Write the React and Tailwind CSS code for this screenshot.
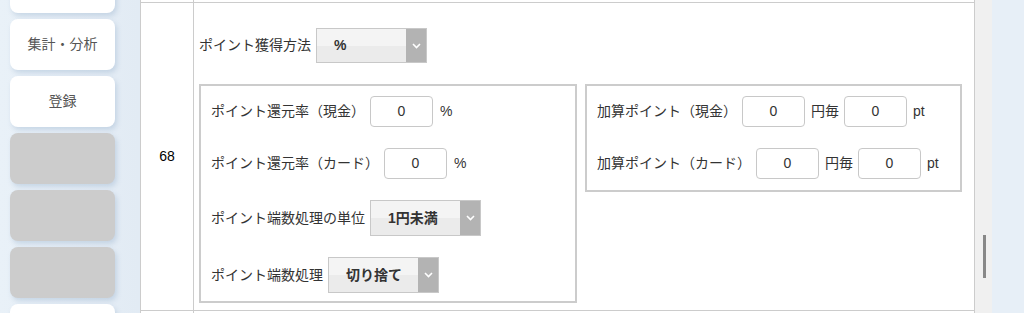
import React from "react";

const FONT = { fontFamily: '"Liberation Sans", "Noto Sans CJK JP", sans-serif' };

// sidebar cards, first one is cut off at the top
const MENU = [
  { label: "", grey: false },
  { label: "集計・分析", grey: false },
  { label: "登録", grey: false },
  { label: "", grey: true },
  { label: "", grey: true },
  { label: "", grey: true },
  { label: "", grey: false },
];

function Chevron() {
  return (
    <svg width="9" height="6" viewBox="0 0 9 6" fill="none">
      <path d="M1 1l3.5 3.5L8 1" stroke="#fff" strokeWidth="1.6" />
    </svg>
  );
}

function Select({ value, h = "h-[36px]" }) {
  return (
    <div className={`w-[111px] ${h} border border-[#c8c8c8] flex shrink-0`}>
      <div className="flex-1 flex flex-col relative">
        <div className="flex-1 bg-[#f4f4f4]" />
        <div className="flex-1 bg-[#ebebeb]" />
        <span className="absolute inset-0 flex items-center pl-[17px] text-[14px] font-semibold text-[#333]">
          {value}
        </span>
      </div>
      <div className="w-[20px] bg-[#b3b3b3] flex items-center justify-center">
        <Chevron />
      </div>
    </div>
  );
}

function Input({ value = "0" }) {
  return (
    <div className="w-[63px] h-[31px] border border-[#c8c8c8] rounded-[4px] bg-white flex items-center justify-center text-[14px] text-[#333] shrink-0">
      {value}
    </div>
  );
}

function Row({ children, h = "h-[31px]" }) {
  return <div className={`flex items-center gap-[5px] ${h} text-[14px] text-[#333] whitespace-nowrap`}>{children}</div>;
}

export default function App() {
  return (
    <div className="w-[1024px] h-[313px] overflow-hidden flex bg-[#e7eff7]" style={FONT}>
      <aside className="w-[140px] shrink-0 pl-[10px] flex flex-col gap-[6px] mt-[-38px] bg-gradient-to-r from-[#e9f1f8] to-[#e2ebf4]">
        {MENU.map((m, i) => (
          <div
            key={i}
            className={`w-[105px] h-[51px] shrink-0 rounded-[8px] flex items-center justify-center text-[14px] text-[#555] shadow-[2px_3px_5px_rgba(120,150,185,0.28)] ${
              m.grey ? "bg-[#cccccc]" : "bg-white"
            }`}
          >
            {m.label}
          </div>
        ))}
      </aside>

      <main className="w-[835px] shrink-0 border-x border-[#cccccc] bg-white flex flex-col">
        <div className="h-[2px] flex shrink-0">
          <div className="w-[53px] border-r border-[#cccccc]" />
        </div>
        <div className="h-[309px] shrink-0 flex border-y border-[#cccccc]">
          <div className="w-[53px] border-r border-[#cccccc] flex items-center justify-center text-[14px] text-black">
            68
          </div>
          <div className="flex-1 pl-[5px] pt-[25px]">
            <Row h="h-[35px]">
              <span>ポイント獲得方法</span>
              <Select value="%" h="h-[35px]" />
            </Row>
            <div className="flex items-start gap-[8px] mt-[21px]">
              <div className="w-[378px] border-2 border-[#cccccc] pt-[10px] pb-[8px] px-[10px] flex flex-col gap-[21px]">
                <Row>
                  <span>ポイント還元率（現金）</span>
                  <Input />
                  <span className="ml-[2px]">%</span>
                </Row>
                <Row>
                  <span>ポイント還元率（カード）</span>
                  <Input />
                  <span className="ml-[2px]">%</span>
                </Row>
                <Row h="h-[36px]">
                  <span>ポイント端数処理の単位</span>
                  <Select value="1円未満" />
                </Row>
                <Row h="h-[36px]">
                  <span>ポイント端数処理</span>
                  <Select value="切り捨て" />
                </Row>
              </div>
              <div className="w-[377px] border-2 border-[#cccccc] pt-[10px] pb-[11px] px-[10px] flex flex-col gap-[21px]">
                <Row>
                  <span>加算ポイント（現金）</span>
                  <Input />
                  <span className="ml-[1px]">円毎</span>
                  <Input />
                  <span className="ml-[1px]">pt</span>
                </Row>
                <Row>
                  <span>加算ポイント（カード）</span>
                  <Input />
                  <span className="ml-[1px]">円毎</span>
                  <Input />
                  <span className="ml-[1px]">pt</span>
                </Row>
              </div>
            </div>
          </div>
        </div>
        <div className="flex-1 flex">
          <div className="w-[53px] border-r border-[#cccccc]" />
        </div>
      </main>

      <div className="w-[17px] shrink-0 bg-[#f0f0f0] pt-[235px]">
        <div className="ml-[8px] w-[3px] h-[43px] bg-[#888888]" />
      </div>
      <div className="flex-1 bg-[#e7eff7]" />
    </div>
  );
}
